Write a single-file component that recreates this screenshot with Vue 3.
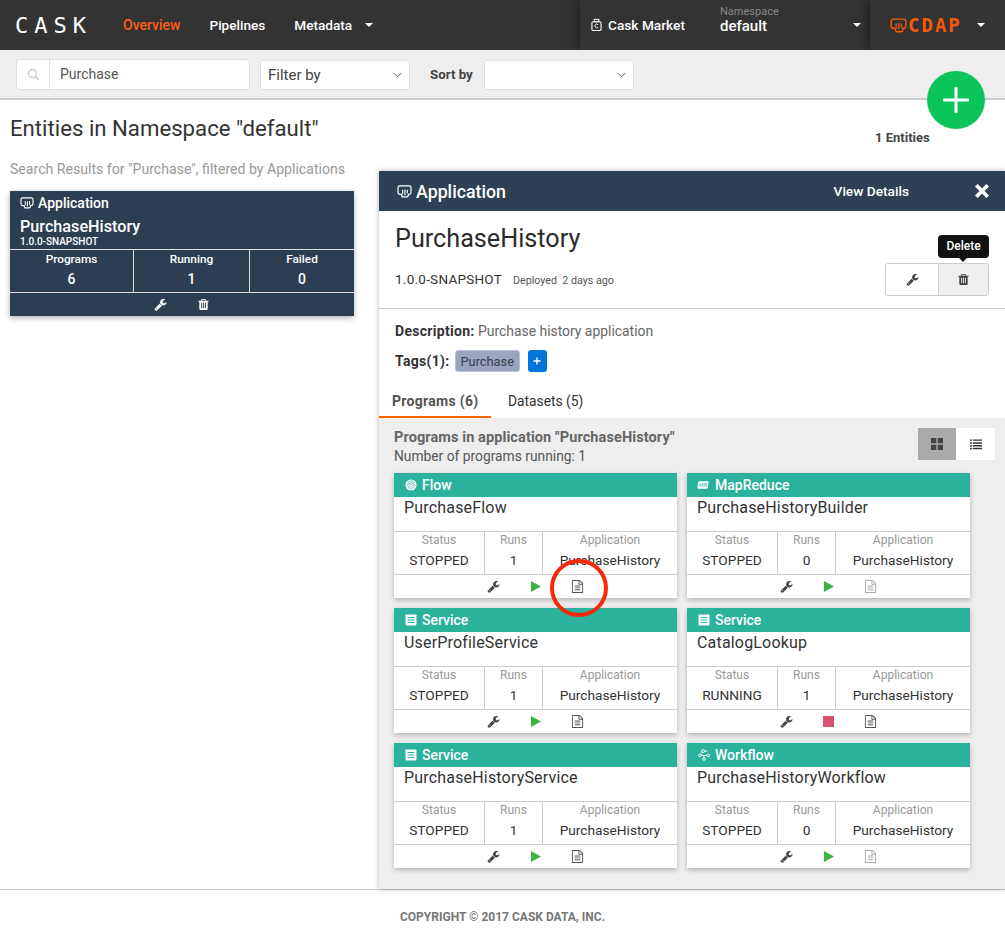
<template>
  <div class="page">
    <header class="nav">
      <div class="brand">CASK</div>
      <a class="nav-link active">Overview</a>
      <a class="nav-link">Pipelines</a>
      <a class="nav-link">Metadata</a>
      <i class="caret metadata-caret"></i>
      <div class="nav-right">
        <div class="market">
          <svg class="market-icon" viewBox="0 0 12 14"><rect x="1" y="3.5" width="10" height="9.5" rx="1.5" fill="none" stroke="#fff" stroke-width="1.2"/><rect x="3.5" y="0.8" width="5" height="2.7" fill="none" stroke="#fff" stroke-width="1.1"/><path d="M7.6 6.6a2 2 0 1 0 0 3" fill="none" stroke="#fff" stroke-width="1"/></svg>
          <span>Cask Market</span>
        </div>
        <div class="namespace">
          <div>
            <div class="ns-label">Namespace</div>
            <div class="ns-value">default</div>
          </div>
          <i class="caret"></i>
        </div>
        <div class="product">
          <svg class="cdap-icon" viewBox="0 0 18 16"><path d="M3.5 1.2h11a2.3 2.3 0 0 1 2.3 2.3v5.2a2.3 2.3 0 0 1-2.3 2.3h-1v2.200a1.500 1.500 0 0 1-1.500 1.500H6.500l-1.300-3.700h-1.700a2.300 2.300 0 0 1-2.300-2.300V3.500a2.300 2.300 0 0 1 2.300-2.300z" fill="none" stroke="#f4590a" stroke-width="1.500"/><path d="M6.500 5.500v6M9.300 5.500v7M12 5.500v5" stroke="#f4590a" stroke-width="1.400"/></svg>
          <span class="cdap">CDAP</span>
          <i class="caret"></i>
        </div>
      </div>
    </header>

    <div class="subbar">
      <div class="search">
        <div class="search-addon">
          <svg viewBox="0 0 14 14"><circle cx="6" cy="6" r="4.300" fill="none" stroke="#ccc" stroke-width="1.600"/><path d="M9.200 9.200l3.600 3.600" stroke="#ccc" stroke-width="1.800"/></svg>
        </div>
        <div class="search-input">Purchase</div>
      </div>
      <div class="select filter">
        <span>Filter by</span>
        <svg class="chevron" viewBox="0 0 10 6"><path d="M1 1l4 4 4-4" fill="none" stroke="#555" stroke-width="1.100"/></svg>
      </div>
      <label class="sort-label">Sort by</label>
      <div class="select sort">
        <svg class="chevron" viewBox="0 0 10 6"><path d="M1 1l4 4 4-4" fill="none" stroke="#555" stroke-width="1.100"/></svg>
      </div>
    </div>

    <main class="main">
      <div class="title-row">
        <h1>Entities in Namespace "default"</h1>
        <span class="count">1 Entities</span>
      </div>
      <button class="fab">
        <svg viewBox="0 0 28 28"><path d="M14 1v26M1 14h26" stroke="#fff" stroke-width="3"/></svg>
      </button>

      <div class="columns">
        <section class="results">
          <p class="results-note">Search Results for "Purchase", filtered by Applications</p>
          <article class="app-card">
            <div class="app-head">
              <div class="app-type"><svg class="type-icon" viewBox="0 0 16 14"><path d="M3 1h10a2 2 0 0 1 2 2v5a2 2 0 0 1-2 2h-1v1.500a1.200 1.200 0 0 1-1.200 1.200H5.500L4.500 10H3a2 2 0 0 1-2-2V3a2 2 0 0 1 2-2z" fill="none" stroke="currentColor" stroke-width="1.300"/><path d="M6 5v5M8.500 5v6M11 5v4" stroke="currentColor" stroke-width="1.200"/></svg>Application</div>
              <div class="app-name">PurchaseHistory</div>
              <div class="app-version">1.0.0-SNAPSHOT</div>
            </div>
            <div class="app-stats">
              <div v-for="s in appStats" :key="s.label" class="app-stat">
                <div class="app-stat-label">{{ s.label }}</div>
                <div class="app-stat-value">{{ s.value }}</div>
              </div>
            </div>
            <div class="app-actions">
              <svg class="ico" viewBox="0 0 1792 1792"><path :d="icons.wrench" fill="#fff"/></svg>
              <svg class="ico" viewBox="0 0 1792 1792"><path :d="icons.trash" fill="#fff"/></svg>
            </div>
          </article>
        </section>

        <section class="panel">
          <div class="panel-head">
            <div class="panel-title"><svg class="panel-icon" viewBox="0 0 16 14"><path d="M3 1h10a2 2 0 0 1 2 2v5a2 2 0 0 1-2 2h-1v1.500a1.200 1.200 0 0 1-1.200 1.200H5.500L4.500 10H3a2 2 0 0 1-2-2V3a2 2 0 0 1 2-2z" fill="none" stroke="currentColor" stroke-width="1.300"/><path d="M6 5v5M8.500 5v6M11 5v4" stroke="currentColor" stroke-width="1.200"/></svg>Application</div>
            <a class="view-details">View Details</a>
            <svg class="close" viewBox="0 0 14 14"><path d="M2 2l10 10M12 2L2 12" stroke="#fff" stroke-width="3.200"/></svg>
          </div>

          <div class="hero">
            <div>
              <h2>PurchaseHistory</h2>
              <div class="meta"><span class="version">1.0.0-SNAPSHOT</span><span class="deployed">Deployed&nbsp; 2 days ago</span></div>
            </div>
            <div class="btn-group">
              <button class="icon-btn"><svg class="ico" viewBox="0 0 1792 1792"><path :d="icons.wrench" fill="#444"/></svg></button>
              <button class="icon-btn on">
                <span class="tooltip">Delete</span>
                <svg class="ico" viewBox="0 0 1792 1792"><path :d="icons.trash" fill="#444"/></svg>
              </button>
            </div>
          </div>

          <div class="details">
            <div class="desc"><b>Description:</b> Purchase history application</div>
            <div class="tags">
              <b>Tags(1):</b>
              <span class="tag">Purchase</span>
              <span class="tag-add"><svg viewBox="0 0 8 8"><path d="M4 0.500v7M0.500 4h7" stroke="#fff" stroke-width="1.400"/></svg></span>
            </div>
          </div>

          <nav class="tabs">
            <a class="tab current">Programs (6)</a>
            <a class="tab">Datasets (5)</a>
          </nav>

          <div class="programs">
            <div class="programs-head">
              <div>
                <div class="programs-title">Programs in application "PurchaseHistory"</div>
                <div class="programs-running">Number of programs running: 1</div>
              </div>
              <div class="toggle">
                <span class="toggle-btn selected"><svg viewBox="0 0 12 12"><path d="M0 0h5.300v5.300H0zM6.700 0H12v5.300H6.700zM0 6.700h5.300V12H0zM6.700 6.700H12V12H6.700z" fill="#444"/></svg></span>
                <span class="toggle-btn"><svg viewBox="0 0 13 12"><path d="M0 1h2v1.600H0zM3 1h10v1.600H3zM0 4h2v1.600H0zM3 4h10v1.600H3zM0 7h2v1.600H0zM3 7h10v1.600H3zM0 10h2v1.600H0zM3 10h10v1.600H3z" fill="#333"/></svg></span>
              </div>
            </div>

            <div class="grid">
              <article v-for="p in programs" :key="p.name" class="card">
                <div class="card-head">
                  <svg v-if="p.type === 'Flow'" class="head-icon" viewBox="0 0 14 14"><circle cx="7" cy="7" r="6.500" fill="#fff"/><path d="M2.500 5a5 5 0 0 1 9 0M2.500 8a4.600 4.600 0 0 1 9 0M4.500 11.500c-.5-3.500 1-5.500 2.500-5.500s3 2 2.500 5.500M7 8.500v5" fill="none" stroke="#2ab29c" stroke-width=".8"/></svg>
                  <svg v-else-if="p.type === 'MapReduce'" class="head-icon wide" viewBox="0 0 14 10"><path d="M3 .5h9.500a1 1 0 0 1 1 1.200l-1 6.600a1.300 1.300 0 0 1-1.300 1.200H1.500a1 1 0 0 1-1-1.200l1-6.600A1.500 1.500 0 0 1 3 .5z" fill="#fff"/><path d="M3 7l.8-4 1.200 3 2-3-.6 4M8 7l.7-4h2.200a1 1 0 0 1 0 2.200H8.500M10 5.200L11 7" fill="none" stroke="#2ab29c" stroke-width=".7"/></svg>
                  <svg v-else-if="p.type === 'Service'" class="head-icon" viewBox="0 0 14 14"><rect x="1" y="1" width="12" height="12" fill="#fff"/><path d="M.5 1v12M13.500 1v12M1 .5h12M1 13.500h12" stroke="#fff" stroke-dasharray="1 1"/><path d="M3 4h8M3 7h8M3 10h8" stroke="#2ab29c" stroke-width="1.200"/></svg>
                  <svg v-else class="head-icon" viewBox="0 0 14 14"><g fill="none" stroke="#fff" stroke-width="1.100"><circle cx="6" cy="2.400" r="1.700"/><circle cx="2" cy="7.500" r="1.500"/><circle cx="12" cy="7.500" r="1.500"/><circle cx="7" cy="11.800" r="1.500"/><path d="M3.500 7.500h7M7 7.500v2.800M7.700 2.400h3.300M5 3.800L3 6.200"/></g></svg>
                  <span>{{ p.type }}</span>
                </div>
                <div class="card-name">{{ p.name }}</div>
                <div class="card-stats">
                  <div class="cell"><div class="cell-label">Status</div><div class="cell-value">{{ p.status }}</div></div>
                  <div class="cell"><div class="cell-label">Runs</div><div class="cell-value">{{ p.runs }}</div></div>
                  <div class="cell"><div class="cell-label">Application</div><div class="cell-value">PurchaseHistory</div></div>
                </div>
                <div class="card-actions">
                  <svg class="ico" viewBox="0 0 1792 1792"><path :d="icons.wrench" fill="#444"/></svg>
                  <svg v-if="p.status === 'RUNNING'" class="run" viewBox="0 0 12 12"><rect width="12" height="12" fill="#d9536f"/></svg>
                  <svg v-else class="run" viewBox="0 0 12 12"><path d="M1 0l11 6-11 6z" fill="#3eb244"/></svg>
                  <svg class="ico" viewBox="0 0 1792 1792"><path :d="icons.file" :fill="p.hasLogs ? '#555' : '#aaa'"/></svg>
                </div>
              </article>
            </div>
            <div class="annotation"></div>
          </div>
        </section>
      </div>
    </main>

    <footer class="footer">COPYRIGHT © 2017 CASK DATA, INC.</footer>
  </div>
</template>

<script setup>
const icons = {
  wrench: 'M448 1472q0-26-19-45t-45-19-45 19-19 45 19 45 45 19 45-19 19-45zm644-420l-682 682q-37 37-90 37-52 0-91-37l-106-108q-38-36-38-90 0-53 38-91l681-681q39 98 114.5 173.5t173.5 114.5zm634-435q0 39-23 106-47 134-164.5 217.5t-258.5 83.5q-185 0-316.5-131.5t-131.5-316.5 131.5-316.5 316.5-131.5q58 0 121.5 16.5t107.5 46.5q16 11 16 28t-16 28l-293 169v224l193 107q5-3 79-48.5t135.5-81 70.5-35.5q15 0 23.5 10t8.5 25z',
  trash: 'M704 1376v-704q0-14-9-23t-23-9h-64q-14 0-23 9t-9 23v704q0 14 9 23t23 9h64q14 0 23-9t9-23zm256 0v-704q0-14-9-23t-23-9h-64q-14 0-23 9t-9 23v704q0 14 9 23t23 9h64q14 0 23-9t9-23zm256 0v-704q0-14-9-23t-23-9h-64q-14 0-23 9t-9 23v704q0 14 9 23t23 9h64q14 0 23-9t9-23zm-544-992h448l-48-117q-7-9-17-11h-317q-10 2-17 11zm928 32v64q0 14-9 23t-23 9h-96v948q0 83-47 143.5t-113 60.5h-832q-66 0-113-58.500t-47-141.500v-952h-96q-14 0-23-9t-9-23v-64q0-14 9-23t23-9h309l70-167q15-37 54-63t79-26h320q40 0 79 26t54 63l70 167h309q14 0 23 9t9 23z',
  file: 'M1596 380q28 28 48 76t20 88v1152q0 40-28 68t-68 28h-1344q-40 0-68-28t-28-68v-1600q0-40 28-68t68-28h896q40 0 88 20t76 48zm-444-244v376h376q-10-29-22-41l-313-313q-12-12-41-22zm384 1528v-1024h-416q-40 0-68-28t-28-68v-416h-768v1536h1280zm-1024-864q0-14 9-23t23-9h704q14 0 23 9t9 23v64q0 14-9 23t-23 9h-704q-14 0-23-9t-9-23v-64zm736 224q14 0 23 9t9 23v64q0 14-9 23t-23 9h-704q-14 0-23-9t-9-23v-64q0-14 9-23t23-9h704zm0 256q14 0 23 9t9 23v64q0 14-9 23t-23 9h-704q-14 0-23-9t-9-23v-64q0-14 9-23t23-9h704z'
}

const appStats = [
  { label: 'Programs', value: 6 },
  { label: 'Running', value: 1 },
  { label: 'Failed', value: 0 }
]

const programs = [
  { type: 'Flow', name: 'PurchaseFlow', status: 'STOPPED', runs: 1, hasLogs: true },
  { type: 'MapReduce', name: 'PurchaseHistoryBuilder', status: 'STOPPED', runs: 0, hasLogs: false },
  { type: 'Service', name: 'UserProfileService', status: 'STOPPED', runs: 1, hasLogs: true },
  { type: 'Service', name: 'CatalogLookup', status: 'RUNNING', runs: 1, hasLogs: true },
  { type: 'Service', name: 'PurchaseHistoryService', status: 'STOPPED', runs: 1, hasLogs: true },
  { type: 'Workflow', name: 'PurchaseHistoryWorkflow', status: 'STOPPED', runs: 0, hasLogs: false }
]
</script>

<style scoped>
.page {
  position: relative;
  display: flex;
  flex-direction: column;
  height: 943px;
  overflow: hidden;
  font-family: Roboto, "Liberation Sans", sans-serif;
  font-size: 14px;
  color: #333;
  background: #fff;
}

.nav {
  display: flex;
  align-items: center;
  flex: none;
  height: 50px;
  padding-left: 15px;
  background: #333;
  color: #fff;
  overflow: hidden;
}
.brand {
  width: 108px;
  font-family: "DejaVu Sans Mono", monospace;
  font-size: 22px;
  letter-spacing: 6px;
  color: #fff;
}
.nav-link {
  margin-right: 29px;
  font-weight: 500;
  font-size: 13.600px;
}
.nav-link.active {
  font-size: 14px;
  color: #ff5e14;
}
.caret {
  display: inline-block;
  width: 0;
  height: 0;
  border-left: 4px solid transparent;
  border-right: 4px solid transparent;
  border-top: 4px solid #fff;
}
.metadata-caret { margin-left: -16px; }
.nav-right {
  display: flex;
  align-items: stretch;
  height: 50px;
  margin-left: auto;
}
.market, .namespace, .product {
  position: relative;
  display: flex;
  align-items: center;
  background: #333;
}
.market {
  width: 120px;
  padding-left: 11px;
  gap: 6px;
  font-size: 13.700px;
  font-weight: 500;
  box-shadow: 0 0 12px rgba(0, 0, 0, 0.55);
}
.market-icon { width: 11px; height: 14px; }
.namespace {
  z-index: 1;
  justify-content: space-between;
  width: 170px;
  padding: 0 9px 0 20px;
}
.ns-label {
  margin-top: -10px;
  font-size: 11px;
  line-height: 12px;
  color: #8a8a8a;
}
.ns-value {
  font-size: 15px;
  line-height: 16px;
  font-weight: 500;
}
.product {
  z-index: 2;
  width: 135px;
  padding-left: 20px;
  box-shadow: 0 0 12px rgba(0, 0, 0, 0.55);
}
.cdap-icon { width: 17px; height: 15px; }
.cdap {
  margin-left: 1px;
  margin-right: 15px;
  font-family: "DejaVu Sans Mono", monospace;
  font-size: 19px;
  font-weight: 700;
  letter-spacing: 2px;
  color: #f4590a;
}

.subbar {
  display: flex;
  align-items: center;
  flex: none;
  height: 50px;
  padding: 1px 0 0 16px;
  background: #eee;
  border-bottom: 2px solid #ccc;
}
.search {
  display: flex;
  width: 234px;
  height: 31px;
  background: #fff;
  border: 1px solid #ddd;
  border-radius: 3px;
}
.search-addon {
  display: flex;
  align-items: center;
  justify-content: center;
  width: 33px;
  border-right: 1px solid #ddd;
}
.search-addon svg { width: 13px; height: 13px; }
.search-input {
  padding-left: 10px;
  line-height: 29px;
  font-size: 14px;
  color: #555;
}
.select {
  display: flex;
  align-items: center;
  justify-content: space-between;
  height: 30px;
  background: #fff;
  border: 1px solid #ddd;
  border-radius: 2px;
  padding: 0 7px;
}
.filter {
  width: 150px;
  margin-left: 10px;
  font-size: 15px;
  color: #444;
}
.sort {
  justify-content: flex-end;
  width: 150px;
}
.chevron { width: 9px; height: 6px; }
.sort-label {
  margin: 0 11px 0 20px;
  font-size: 13.300px;
  font-weight: 700;
  color: #444;
}

.main {
  position: relative;
  display: flex;
  flex-direction: column;
  flex: 1;
  min-height: 0;
}
.title-row {
  position: relative;
  flex: none;
  height: 71px;
  padding-left: 10px;
}
h1 {
  margin: 0;
  padding-top: 15px;
  font-size: 22.200px;
  line-height: 26px;
  font-weight: 400;
  color: #333;
}
.count {
  position: absolute;
  left: 875px;
  top: 31px;
  font-size: 13px;
  font-weight: 700;
  line-height: 14px;
  color: #444;
}
.fab {
  position: absolute;
  left: 927px;
  top: -29px;
  width: 58px;
  height: 58px;
  padding: 0;
  border: none;
  border-radius: 50%;
  background: #0bc45a;
  display: flex;
  align-items: center;
  justify-content: center;
}
.fab svg { width: 28px; height: 28px; }

.columns {
  display: flex;
  flex: 1;
  min-height: 0;
}
.results {
  flex: none;
  width: 379px;
  padding-left: 10px;
}
.results-note {
  margin: -10px 0 14px;
  font-size: 14.100px;
  line-height: 16px;
  color: #999;
}
.app-card {
  width: 344px;
  height: 125px;
  background: #2e3e52;
  color: #fff;
  box-shadow: 0 2px 6px rgba(0, 0, 0, 0.3);
}
.app-head {
  height: 58px;
  padding: 4px 10px 0;
}
.app-type {
  display: flex;
  align-items: center;
  font-size: 14px;
  line-height: 16px;
  font-weight: 500;
}
.type-icon {
  width: 14px;
  height: 12px;
  margin-right: 4px;
}
.app-name {
  margin-top: 6px;
  font-size: 16.200px;
  line-height: 19px;
  font-weight: 500;
}
.app-version {
  font-size: 10px;
  line-height: 11px;
  font-weight: 500;
}
.app-stats {
  display: grid;
  grid-template-columns: 124px 116px 1fr;
  height: 44px;
  border-top: 1px solid #ddd;
  border-bottom: 1px solid #ddd;
}
.app-stat {
  text-align: center;
  border-right: 1px solid #ddd;
}
.app-stat:last-child { border-right: none; }
.app-stat-label {
  margin-top: 2px;
  font-size: 11.800px;
  line-height: 15px;
  font-weight: 500;
  color: #fff;
}
.app-stat-value {
  margin-top: 4px;
  font-size: 14px;
  line-height: 17px;
  font-weight: 500;
}
.app-actions {
  display: flex;
  align-items: center;
  justify-content: center;
  gap: 30px;
  height: 23px;
}
.ico {
  width: 13px;
  height: 13px;
  flex: none;
}

.panel {
  display: flex;
  flex-direction: column;
  flex: 1;
  min-width: 0;
  box-shadow: 0 0 5px rgba(0, 0, 0, 0.3);
}
.panel-head {
  display: flex;
  align-items: center;
  flex: none;
  height: 40px;
  padding: 0 15px 0 18px;
  background: #2f4054;
  color: #fff;
}
.panel-title {
  display: flex;
  align-items: center;
  font-size: 17.800px;
  font-weight: 500;
}
.panel-icon {
  width: 15px;
  height: 13px;
  margin-right: 4px;
}
.view-details {
  margin-left: auto;
  margin-right: 65px;
  font-size: 13.700px;
  font-weight: 500;
}
.close { width: 16px; height: 16px; }

.hero {
  display: flex;
  justify-content: space-between;
  flex: none;
  height: 98px;
  padding: 0 16px;
  border-bottom: 1px solid #ccc;
}
h2 {
  margin: 13px 0 0;
  font-size: 25.200px;
  line-height: 30px;
  font-weight: 400;
  color: #2b2b2b;
}
.meta {
  display: flex;
  align-items: baseline;
  margin-top: 17px;
}
.version {
  font-size: 13.500px;
  letter-spacing: .25px;
  color: #333;
}
.deployed {
  margin-left: 11px;
  font-size: 10.700px;
  color: #555;
}
.btn-group {
  display: flex;
  align-self: flex-start;
  margin-top: 52px;
  height: 33px;
  border: 1px solid #ccc;
  border-radius: 3px;
}
.icon-btn {
  position: relative;
  display: flex;
  align-items: center;
  justify-content: center;
  width: 52px;
  padding: 0;
  border: none;
  background: #fff;
  border-radius: 3px 0 0 3px;
}
.icon-btn.on {
  width: 50px;
  background: #eee;
  border-left: 1px solid #ccc;
  border-radius: 0 3px 3px 0;
}
.tooltip {
  position: absolute;
  left: -1px;
  top: -29px;
  width: 51px;
  height: 23px;
  border-radius: 4px;
  background: #111;
  color: #fff;
  font-family: Roboto, sans-serif;
  font-size: 12px;
  font-weight: 500;
  line-height: 23px;
  text-align: center;
}
.tooltip::after {
  content: "";
  position: absolute;
  left: 21px;
  bottom: -4px;
  border-left: 4px solid transparent;
  border-right: 4px solid transparent;
  border-top: 4px solid #111;
}

.details {
  flex: none;
  height: 71px;
  padding: 14px 16px 0;
  font-size: 13.900px;
  color: #666;
}
.details b {
  font-size: 14px;
  font-weight: 700;
  letter-spacing: .3px;
  color: #333;
}
.desc { line-height: 17px; }
.tags {
  display: flex;
  align-items: center;
  margin-top: 10px;
  height: 22px;
}
.tag {
  margin-left: 5px;
  padding: 0 5px;
  height: 22px;
  line-height: 21px;
  border: 1px solid #bcc3d6;
  border-radius: 3px;
  background: #9aa3bf;
  color: #3c4150;
  font-size: 12.800px;
}
.tag-add {
  display: flex;
  align-items: center;
  justify-content: center;
  width: 19px;
  height: 22px;
  margin-left: 8px;
  border-radius: 3px;
  background: #0076dc;
}
.tag-add svg { width: 8px; height: 8px; }

.tabs {
  display: flex;
  flex: none;
  height: 38px;
}
.tab {
  padding: 10px 0 0;
  font-size: 13.800px;
  line-height: 22px;
  color: #333;
}
.tab.current {
  width: 112px;
  padding-left: 13px;
  margin-right: 17px;
  height: 38px;
  font-size: 14px;
  font-weight: 700;
  letter-spacing: .3px;
  color: #555;
  border-bottom: 2px solid #ff6600;
}
.programs {
  position: relative;
  flex: 1;
  min-height: 0;
  padding: 0 35px 0 15px;
  background: #eee;
}
.programs-head {
  display: flex;
  justify-content: space-between;
  height: 55px;
  padding-top: 10px;
}
.programs-title {
  margin-top: 1px;
  font-size: 14.500px;
  letter-spacing: .1px;
  line-height: 18px;
  font-weight: 700;
  color: #666;
}
.programs-running {
  font-size: 13.800px;
  line-height: 18px;
  color: #555;
}
.toggle {
  display: flex;
  height: 32px;
  margin-right: -25px;
}
.toggle-btn {
  display: flex;
  align-items: center;
  justify-content: center;
  width: 39px;
  background: #fff;
}
.toggle-btn.selected {
  width: 38px;
  background: #aaa;
}
.toggle-btn svg { width: 12px; height: 12px; }

.grid {
  display: grid;
  grid-template-columns: 283px 283px;
  gap: 10px;
}
.card {
  height: 125px;
  background: #fff;
  box-shadow: 0 2px 5px rgba(0, 0, 0, 0.25);
}
.card-head {
  display: flex;
  align-items: center;
  height: 24px;
  padding-left: 11px;
  background: #2ab29c;
  color: #fff;
  font-size: 14px;
  font-weight: 500;
}
.head-icon {
  width: 12px;
  height: 12px;
  margin-right: 5px;
}
.head-icon.wide { margin-left: -1px; margin-right: 6px; }
.card-name {
  height: 34px;
  padding-left: 10px;
  font-size: 16px;
  letter-spacing: .18px;
  line-height: 22px;
  color: #333;
}
.card-stats {
  display: grid;
  grid-template-columns: 91px 58px 1fr;
  height: 44px;
  border-top: 1px solid #ccc;
  border-bottom: 1px solid #ccc;
}
.cell {
  text-align: center;
  border-right: 1px solid #ccc;
}
.cell:last-child { border-right: none; }
.cell-label {
  margin-top: 1px;
  font-size: 12px;
  line-height: 15px;
  color: #999;
}
.cell-value {
  margin-top: 4px;
  font-size: 13.700px;
  line-height: 17px;
  color: #333;
}
.card-actions {
  display: flex;
  align-items: center;
  justify-content: center;
  gap: 30px;
  height: 23px;
}
.run { width: 11px; height: 11px; }
.annotation {
  position: absolute;
  left: 171px;
  top: 141px;
  width: 58px;
  height: 58px;
  border: 4px solid #f5290a;
  border-radius: 50%;
}

.footer {
  flex: none;
  height: 54px;
  border-top: 1px solid #ccc;
  text-align: center;
  line-height: 54px;
  font-size: 12px;
  font-weight: 700;
  color: #777;
}
</style>

<style>
html, body { margin: 0; background: #fff; }
* { box-sizing: border-box; }
</style>
